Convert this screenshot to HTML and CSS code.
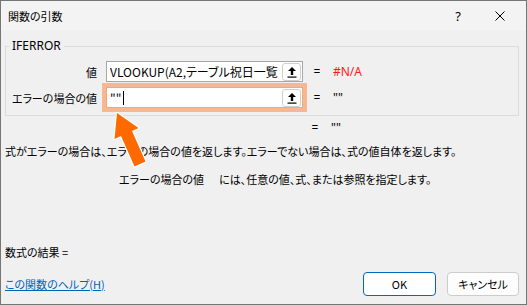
FILE: index.html
```html
<!DOCTYPE html>
<html>
<head lang="ja">
    <meta charset="UTF-8">
    <title>関数の引数</title>
    <link rel="stylesheet" href="styles.css">
</head>
<body>
<div class="dialog">
    <div class="titlebar">
        <span class="title">関数の引数</span>
        <span class="help">?</span>
        <span class="close">
            <svg width="10" height="10" viewBox="0 0 10 10"><path d="M0.5 0.5 L9.5 9.5 M9.5 0.5 L0.5 9.5" stroke="#000" stroke-width="1" fill="none"/></svg>
        </span>
    </div>
    <div class="content">
        <fieldset class="args">
            <legend>IFERROR</legend>
            <div class="arg">
                <label>値</label>
                <div class="field">
                    <span class="text">VLOOKUP(A2,テーブル祝日一覧</span>
                    <span class="ref"><svg width="10" height="12" viewBox="0 0 10 12"><path d="M5 1 L9 5 L6.2 5 L6.2 9 L3.8 9 L3.8 5 L1 5 Z" fill="#000"/><rect x="0.5" y="10.5" width="9" height="1.2" fill="#000"/></svg></span>
                </div>
                <span class="eq">=</span>
                <span class="val error">#N/A</span>
            </div>
            <div class="arg">
                <label>エラーの場合の値</label>
                <div class="field active">
                    <span class="text">""<span class="caret"></span></span>
                    <span class="ref"><svg width="10" height="12" viewBox="0 0 10 12"><path d="M5 1 L9 5 L6.2 5 L6.2 9 L3.8 9 L3.8 5 L1 5 Z" fill="#000"/><rect x="0.5" y="10.5" width="9" height="1.2" fill="#000"/></svg></span>
                </div>
                <span class="eq">=</span>
                <span class="val">""</span>
            </div>
        </fieldset>
        <div class="arg total">
            <span></span>
            <span></span>
            <span class="eq">=</span>
            <span class="val">""</span>
        </div>
        <p class="desc">式がエラーの場合は、エラーの場合の値を返します。エラーでない場合は、式の値自体を返します。</p>
        <p class="desc hint"><span class="name">エラーの場合の値</span>には、任意の値、式、または参照を指定します。</p>
        <div class="result">数式の結果 =</div>
        <div class="footer">
            <a class="help-link" href="#">この関数のヘルプ(H)</a>
            <button class="btn ok">OK</button>
            <button class="btn">キャンセル</button>
        </div>
    </div>
    <svg class="pointer" width="527" height="305" viewBox="0 0 527 305">
        <polygon points="117,113 138.5,128 132,131 145.5,161.5 134.5,166.5 121,136 114.5,139"
                 fill="#ff6a00" stroke="#fff" stroke-width="2.5" stroke-linejoin="round" paint-order="stroke"/>
    </svg>
</div>
</body>
</html>
```

FILE: styles.css
```css
* {
    margin: 0;
    padding: 0;
    box-sizing: border-box;
}

body {
    font-family: "Noto Sans CJK JP", "Noto Sans", sans-serif;
    font-size: 11px;
    line-height: 16px;
    color: #000;
    font-feature-settings: "palt";
}

.dialog {
    position: relative;
    width: 527px;
    height: 305px;
    border: 1px solid #767676;
    background: #f0f0f0;
    display: flex;
    flex-direction: column;
}

.titlebar {
    height: 30px;
    background: #f3f3f3;
    display: flex;
    align-items: center;
    padding-left: 7px;
}

.title {
    flex: 1;
}

.help {
    width: 20px;
    margin-right: 27px;
    text-align: center;
    font-family: "Noto Sans", sans-serif;
    font-size: 13px;
}

.close {
    width: 10px;
    height: 10px;
    margin-right: 21px;
    display: flex;
}

.content {
    flex: 1;
    display: flex;
    flex-direction: column;
    padding: 7px 7px 8px 4px;
}

.args {
    border: 1px solid #dcdcdc;
    padding: 7px 0 7px 0;
    display: flex;
    flex-direction: column;
    gap: 5px;
}

.args legend {
    margin-left: 3px;
    padding: 0 3px;
    line-height: 16px;
    font-family: "Noto Sans", sans-serif;
    font-size: 12px;
}

.arg {
    display: grid;
    grid-template-columns: 91px 197px 10px 1fr;
    column-gap: 9px;
    align-items: center;
    height: 21px;
}

.arg label {
    text-align: right;
    white-space: nowrap;
}

.field {
    height: 21px;
    background: #fff;
    border: 1px solid #a6a6a6;
    display: flex;
    align-items: center;
    padding: 0 1px 0 3px;
    font-size: 12px;
}

.field.active {
    border-color: #f2a878;
    outline: 4px solid #f7b790;
}

.field .text {
    flex: 1;
    white-space: nowrap;
    overflow: hidden;
    display: flex;
    align-items: center;
}

.caret {
    display: inline-block;
    width: 1px;
    height: 14px;
    background: #000;
    margin-left: 2px;
}

.ref {
    width: 19px;
    height: 18px;
    border: 1px solid #cfcfcf;
    border-radius: 3px;
    background: #fff;
    display: flex;
    align-items: center;
    justify-content: center;
}

.eq {
    text-align: center;
    font-family: "Noto Sans", sans-serif;
    font-size: 12px;
}

.val {
    margin-left: 2px;
    font-family: "Noto Sans", sans-serif;
    font-size: 12px;
}

.error {
    color: #ff1a1a;
}

.total {
    margin-top: 4px;
    height: 16px;
    margin-left: -1px;
}

.desc {
    margin-top: 7px;
}

.hint {
    margin-top: 12px;
    padding-left: 114px;
}

.hint .name {
    margin-right: 15px;
}

.result {
    margin-top: auto;
}

.footer {
    margin-top: 12px;
    display: flex;
    align-items: center;
    gap: 11px;
}

.help-link {
    flex: 1;
    color: #0063b1;
    text-decoration: underline;
}

.btn {
    height: 24px;
    width: 72px;
    border: 1px solid #cccccc;
    border-radius: 4px;
    background: #fdfdfd;
    font-family: "Noto Sans CJK JP", "Noto Sans", sans-serif;
    font-size: 11px;
    font-feature-settings: "palt";
    color: #000;
}

.btn.ok {
    width: 73px;
    border-color: #0067c0;
    background: #fff;
}

.pointer {
    position: absolute;
    left: -1px;
    top: -1px;
    pointer-events: none;
}
```
